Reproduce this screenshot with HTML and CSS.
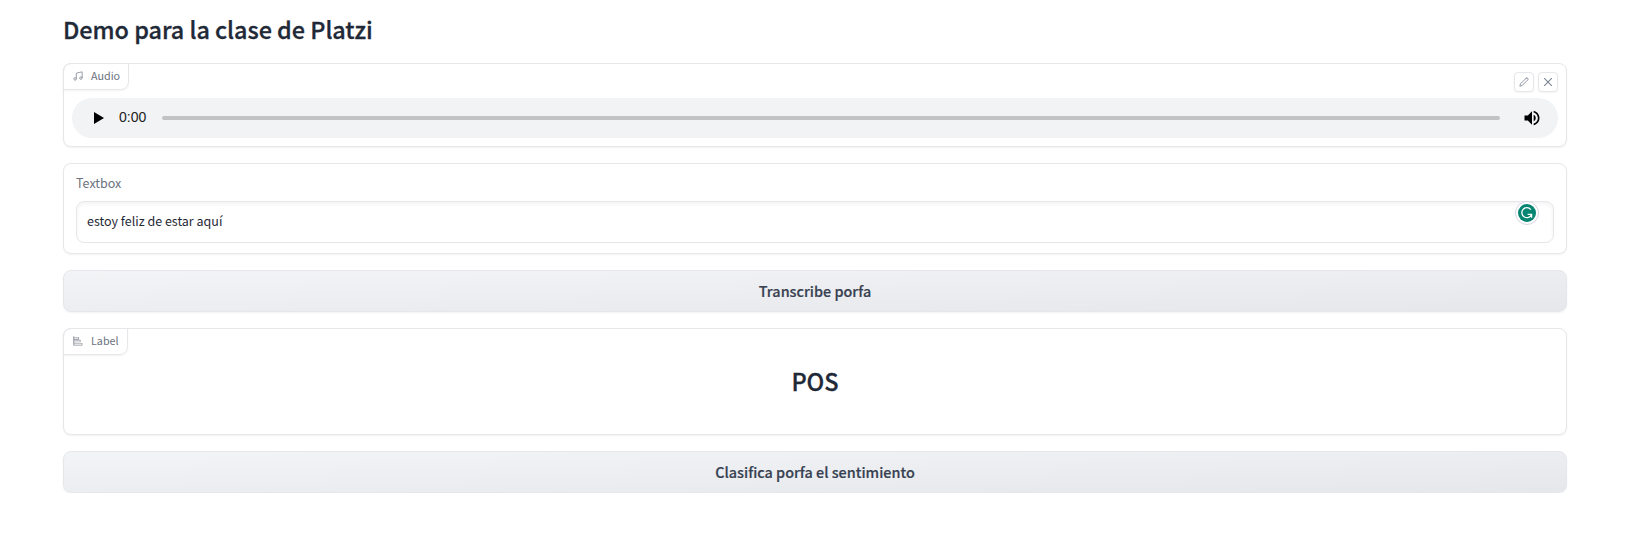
FILE: index.html
```html
<!DOCTYPE html>
<html lang="es">
<head>
<meta charset="utf-8">
<title>Demo</title>
<link rel="stylesheet" href="styles.css">
</head>
<body>
<main class="app">
  <h1 class="title"><span>Demo para la clase de Platzi</span></h1>
  <section class="card audio">
    <div class="tag">
      <svg class="tag-icon" viewBox="0 0 24 24" fill="none" stroke="currentColor" stroke-width="2"><path d="M8 19V5l14-3v15"/><circle cx="5" cy="19" r="3"/><circle cx="19" cy="17" r="3"/></svg>
      <span>Audio</span>
    </div>
    <div class="tools">
      <button class="tool" aria-label="Editar"><svg viewBox="0 0 24 24" fill="none" stroke="currentColor" stroke-width="2" stroke-linecap="round" stroke-linejoin="round"><path d="M17 3a2.828 2.828 0 1 1 4 4L7.500 20.500 2 22l1.500-5.500L17 3z"/></svg></button>
      <button class="tool" aria-label="Cerrar"><svg viewBox="0 0 24 24" fill="none" stroke="currentColor" stroke-width="2.500" stroke-linecap="round"><path d="M3.500 3.500l17 17M20.500 3.500l-17 17"/></svg></button>
    </div>
    <div class="player">
      <svg class="play" viewBox="0 0 20 20"><path d="M6 4v12l10-6z"/></svg>
      <span class="time">0:00</span>
      <div class="track"></div>
      <svg class="volume" viewBox="0 0 24 24"><path d="M3 9v6h4l5 5V4L7 9H3zm13.500 3c0-1.770-1.020-3.290-2.500-4.030v8.050c1.480-.730 2.500-2.250 2.500-4.020zM14 3.230v2.060c2.890.860 5 3.540 5 6.710s-2.110 5.850-5 6.710v2.060c4.010-.910 7-4.490 7-8.770s-2.990-7.860-7-8.770z"/></svg>
    </div>
  </section>
  <section class="card textbox">
    <div class="field-label">Textbox</div>
    <div class="input">
      <span>estoy feliz de estar aquí</span>
      <svg class="assistant" viewBox="0 0 24 24"><circle cx="12" cy="12" r="11.500" fill="#fff" stroke="#d5d5e4"/><circle cx="12" cy="12" r="9" fill="#078573"/><path d="M15.800 8.600A5 5 0 1 0 16.600 13.300M12.600 13.300H16.600V16.800" fill="none" stroke="#fff" stroke-width="1.300"/></svg>
    </div>
  </section>
  <button class="action"><span>Transcribe porfa</span></button>
  <section class="card result">
    <div class="tag tag-label">
      <svg class="tag-icon" viewBox="0 0 32 32" fill="currentColor"><path d="M1 1h3v29H1zM4 3h15v2H4zM17 5h2v5h-2zM4 9h15v2H4zM22 13h2v5h-2zM4 12h20v2H4zM4 18h20v2H4zM4 22h26v2H4zM28 24h2v5h-2zM4 28h26v2H4z"/></svg>
      <span>Label</span>
    </div>
    <div class="value">POS</div>
  </section>
  <button class="action"><span>Clasifica porfa el sentimiento</span></button>
</main>
</body>
</html>
```
FILE: styles.css
```css
* { box-sizing: border-box; }
body {
  margin: 0;
  background: #fff;
  color: #1f2937;
  font-family: "Noto Sans CJK SC", "Noto Sans", sans-serif;
}
.app {
  display: flex;
  flex-direction: column;
  gap: 16px;
  padding: 13px 70px 0 63px;
}
.title {
  height: 34px;
  margin: 0;
  font-size: 23.4px;
  font-weight: 500;
  line-height: 32px;
  letter-spacing: -.03px;
  -webkit-text-stroke: .3px currentColor;
}
.card {
  position: relative;
  border: 1px solid #e5e7eb;
  border-radius: 8px;
  background: #fff;
  box-shadow: 0 1px 2px rgba(0, 0, 0, .05);
}
.audio { height: 84px; padding: 34px 8px 0; }
.tag {
  position: absolute;
  top: -1px;
  left: -1px;
  display: flex;
  align-items: center;
  gap: 8px;
  width: 66px;
  height: 27px;
  padding: 0 0 1px 9px;
  border: 1px solid #e5e7eb;
  border-radius: 8px 0 8px 0;
  box-shadow: 0 1px 2px rgba(0, 0, 0, .05);
  color: #6b7280;
  font-size: 10.75px;
  line-height: 16px;
}
.tag span { margin-top: -1px; }
.tag-label { width: 65px; }
.tag-icon { width: 10px; height: 10px; opacity: .8; }
.tools { position: absolute; top: 8px; right: 8px; display: flex; gap: 4px; }
.tool {
  display: grid;
  place-items: center;
  width: 20px;
  height: 20px;
  padding: 0 0 1px;
  border: 1px solid #e5e7eb;
  border-radius: 4px;
  background: #fff;
  box-shadow: 0 1px 2px rgba(0, 0, 0, .05);
  color: #7b8494;
}
.tool svg { width: 10px; height: 10px; }
.player {
  display: flex;
  align-items: center;
  height: 40px;
  padding: 0 16px;
  border-radius: 20px;
  background: #f1f3f4;
}
.play, .volume { flex: none; width: 20px; height: 20px; }
.time {
  width: 43px;
  margin: -2px 0 0 11px;
  color: #222;
  font: 14px/20px "Liberation Sans", Arial, sans-serif;
}
.track {
  flex: 1;
  height: 4px;
  border-radius: 2px;
  background: #c1c2c3;
}
.volume { margin-left: 22px; }
.textbox { height: 91px; padding: 9px 12px; }
.field-label {
  height: 20px;
  margin-bottom: 8px;
  color: #6b7280;
  font-size: 12.5px;
  line-height: 20px;
}
.input {
  position: relative;
  height: 42px;
  padding: 0 10px;
  border: 1px solid #e5e7eb;
  border-radius: 8px;
  box-shadow: inset 0 2px 4px rgba(0, 0, 0, .05);
  font-size: 12.5px;
  line-height: 37px;
}
.assistant { position: absolute; top: -1px; right: 14px; width: 24px; height: 24px; }
.action {
  height: 42px;
  padding: 0;
  border: 1px solid #e5e7eb;
  border-radius: 8px;
  background: linear-gradient(to bottom right, #f3f4f6, #e5e7eb);
  box-shadow: 0 1px 2px rgba(0, 0, 0, .05);
  color: #374151;
  font-family: inherit;
  font-size: 14.4px;
  font-weight: 500;
  line-height: 24px;
  -webkit-text-stroke: .2px currentColor;
}
.result { height: 107px; }
.value {
  padding-top: 34px;
  font-size: 23.5px;
  font-weight: 500;
  line-height: 36px;
  text-align: center;
  -webkit-text-stroke: .3px currentColor;
}
```
